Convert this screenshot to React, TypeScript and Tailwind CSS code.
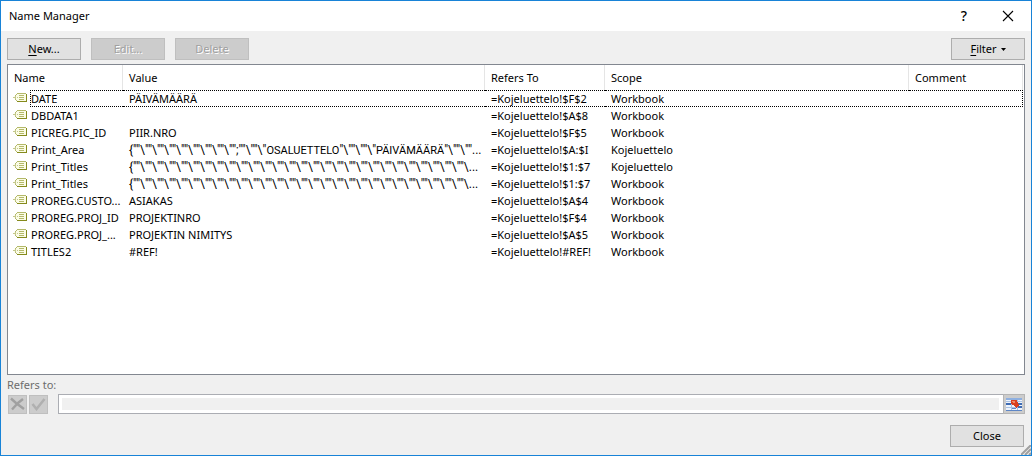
import type { ReactNode } from 'react';

type NameEntry = {
  name: string;
  value: string;
  refersTo: string;
  scope: string;
};

const titlesValue = '{' + '""\\'.repeat(28) + '...';

const entries: NameEntry[] = [
  { name: 'DATE', value: 'PÄIVÄMÄÄRÄ', refersTo: '=Kojeluettelo!$F$2', scope: 'Workbook' },
  { name: 'DBDATA1', value: '', refersTo: '=Kojeluettelo!$A$8', scope: 'Workbook' },
  { name: 'PICREG.PIC_ID', value: 'PIIR.NRO', refersTo: '=Kojeluettelo!$F$5', scope: 'Workbook' },
  {
    name: 'Print_Area',
    value: '{""\\""\\""\\""\\""\\""\\""\\""\\"";""\\""\\"OSALUETTELO"\\""\\""\\"PÄIVÄMÄÄRÄ"\\""\\""...',
    refersTo: '=Kojeluettelo!$A:$I',
    scope: 'Kojeluettelo',
  },
  { name: 'Print_Titles', value: titlesValue, refersTo: '=Kojeluettelo!$1:$7', scope: 'Kojeluettelo' },
  { name: 'Print_Titles', value: titlesValue, refersTo: '=Kojeluettelo!$1:$7', scope: 'Workbook' },
  { name: 'PROREG.CUSTO...', value: 'ASIAKAS', refersTo: '=Kojeluettelo!$A$4', scope: 'Workbook' },
  { name: 'PROREG.PROJ_ID', value: 'PROJEKTINRO', refersTo: '=Kojeluettelo!$F$4', scope: 'Workbook' },
  { name: 'PROREG.PROJ_...', value: 'PROJEKTIN NIMITYS', refersTo: '=Kojeluettelo!$A$5', scope: 'Workbook' },
  { name: 'TITLES2', value: '#REF!', refersTo: '=Kojeluettelo!#REF!', scope: 'Workbook' },
];

function TagIcon() {
  return (
    <svg width="14" height="10" viewBox="0 0 14 10" shapeRendering="crispEdges" className="block">
      <path d="M4 0h9v9H4L1 6V3z" fill="#fbfce6" />
      <path d="M4 0h9v1H4zM3 1h1v1H3zM2 2h1v1H2zM2 6h1v1H2zM3 7h1v1H3z" fill="#b4b96a" />
      <path d="M4 8h10v1H4zM13 1h1v8h-1z" fill="#858a1c" />
      <path d="M0 4h2v1H0zM2 3h1v3H2zM4 4h1v1H4z" fill="#c3c78c" />
      <path d="M6 2h5v1H6zM6 4h5v1H6zM6 6h5v1H6z" fill="#b4b96a" />
    </svg>
  );
}

function RangePickerIcon() {
  return (
    <svg width="16" height="13" viewBox="0 0 16 13" shapeRendering="crispEdges">
      <path d="M0 0h16v13H0z" fill="#eef4fc" />
      <path d="M0 0h16v2H0z" fill="#8fb0e0" />
      <path d="M0 3h16v1H0zM0 9h16v1H0zM5 2h1v11H5zM11 2h1v11h-1z" fill="#a9c1e4" />
      <path d="M0 5h5v2H0zM12 5h4v2h-4zM12 8h4v2h-4z" fill="#3f6cb4" />
      <path d="M0 12h16v1H0zM6 10h4v1H6z" fill="#5d86c6" />
      <path d="M5 2h6v2h1v2h1v2h-1v1h-1v1h-1V9H9V8H8V7H6V6H5z" fill="#d9401f" />
      <path d="M6 3h3v1H6zM7 4h2v1H7z" fill="#f08a66" />
    </svg>
  );
}

// Array constants are mostly quotes and backslashes: the punctuation is set a size up from the words
function ArrayValue({ value }: { value: string }) {
  return (
    <span className="font-['Roboto',sans-serif] text-[12px]">
      {value.split(/([A-ZÄ]+)/).map((part, i) => (
        <span key={i} className={i % 2 === 1 ? 'text-[11px]' : undefined}>
          {part}
        </span>
      ))}
    </span>
  );
}

function DialogButton({ children, disabled }: { children: ReactNode; disabled?: boolean }) {
  return (
    <button
      type="button"
      disabled={disabled}
      className="flex h-[22px] w-[74px] items-center justify-center border border-[#adadad] bg-[#e1e1e1] text-black disabled:border-[#bfbfbf] disabled:bg-[#cccccc] disabled:text-[#a0a0a0] disabled:[text-shadow:1px_1px_0_#fff]"
    >
      {children}
    </button>
  );
}

export default function App() {
  return (
    <div className="flex min-h-screen flex-col border border-[#1883d7] bg-[#f0f0f0] font-['Noto_Sans','Open_Sans',sans-serif] text-[11px] leading-4 text-black">
      {/* Title bar */}
      <header className="flex h-[30px] items-center justify-between bg-white pr-[17px] pl-2">
        <h1>Name Manager</h1>
        <div className="flex items-center gap-8">
          <button type="button" aria-label="Help" className="w-3 text-[14px] font-medium">
            ?
          </button>
          <button type="button" aria-label="Close window">
            <svg width="12" height="12" viewBox="0 0 12 12" className="block">
              <path d="M1 1l10 10M11 1L1 11" stroke="#000" strokeWidth="1.1" />
            </svg>
          </button>
        </div>
      </header>

      <main className="relative flex flex-1 flex-col px-1.5 pb-2">
        {/* Toolbar */}
        <div className="flex items-center justify-between pt-[7px] pb-1">
          <div className="flex gap-2.5">
            <DialogButton>
              <span>
                <u className="underline-offset-2">N</u>ew...
              </span>
            </DialogButton>
            <DialogButton disabled>Edit...</DialogButton>
            <DialogButton disabled>Delete</DialogButton>
          </div>
          <DialogButton>
            <span>
              <u className="underline-offset-2">F</u>ilter
            </span>
            <svg width="5" height="3" viewBox="0 0 5 3" className="ml-1">
              <path d="M0 0h5L2.5 3z" />
            </svg>
          </DialogButton>
        </div>

        {/* Defined names */}
        <div className="min-h-[311px] flex-1 border border-[#828790] bg-white pr-px">
          <table className="w-full table-fixed border-separate border-spacing-0">
            <colgroup>
              <col className="w-[22px]" />
              <col className="w-[93px]" />
              <col className="w-[362px]" />
              <col className="w-[120px]" />
              <col className="w-[304px]" />
              <col />
            </colgroup>
            <thead>
              <tr className="h-[25px] text-left *:border-r *:border-[#e5e5e5] *:p-0 *:pl-1.5 *:font-normal">
                <th colSpan={2}>Name</th>
                <th>Value</th>
                <th>Refers To</th>
                <th>Scope</th>
                <th>Comment</th>
              </tr>
            </thead>
            <tbody>
              {entries.map((entry, i) => {
                const cell = i === 0 ? 'border-y border-dotted border-black' : 'border-y border-transparent';
                return (
                  <tr key={i} className="h-[17px] leading-[15px] *:p-0">
                    <td className="align-top">
                      <div className="pt-[3px] pl-[5px]">
                        <TagIcon />
                      </div>
                    </td>
                    <td className={`${cell} border-l whitespace-nowrap`}>{entry.name}</td>
                    <td className={cell}>
                      <div className="h-[15px] pl-1.5 whitespace-nowrap">
                        {entry.value.startsWith('{') ? <ArrayValue value={entry.value} /> : entry.value}
                      </div>
                    </td>
                    <td className={cell}>
                      <div className="pl-1.5 whitespace-nowrap">{entry.refersTo}</div>
                    </td>
                    <td className={cell}>
                      <div className="pl-1.5">{entry.scope}</div>
                    </td>
                    <td className={`${cell} border-r`} />
                  </tr>
                );
              })}
            </tbody>
          </table>
        </div>

        {/* Reference editor */}
        <label htmlFor="refers-to" className="mt-0.5 text-[#6d6d6d]">
          Refers to:
        </label>
        <div className="mt-px flex h-5 items-center">
          <div className="flex gap-0.5 pl-px">
            <button type="button" disabled aria-label="Cancel edit" className="grid size-[19px] place-items-center border border-[#bfbfbf] bg-[#cccccc]">
              <svg width="15" height="14" viewBox="0 0 15 14">
                <path d="M1 1.5l5 4.5 8 6M13 2L8 6l-6 6.5" fill="none" stroke="#a0a0a0" strokeWidth="2.4" />
              </svg>
            </button>
            <button type="button" disabled aria-label="Accept edit" className="grid size-[19px] place-items-center border border-[#bfbfbf] bg-[#cccccc]">
              <svg width="15" height="14" viewBox="0 0 15 14">
                <path d="M1.5 7l4 5 8-10" fill="none" stroke="#b0b0b0" strokeWidth="2.6" />
              </svg>
            </button>
          </div>
          <div className="ml-2.5 flex h-5 flex-1 border border-[#abadb3] bg-white">
            <input id="refers-to" type="text" disabled className="m-[3px] mr-1 min-w-0 flex-1 bg-[#f0f0f0]" />
            <button type="button" aria-label="Collapse dialog" className="-my-px -mr-px grid w-[22px] place-items-center border border-[#b5b5b5] bg-[#cccccc]">
              <RangePickerIcon />
            </button>
          </div>
        </div>

        <div className="mt-[11px] flex justify-end pr-px">
          <DialogButton>Close</DialogButton>
        </div>

        {/* Resize grip */}
        <svg width="10" height="10" viewBox="0 0 10 10" className="absolute right-0 bottom-0">
          <path d="M0 10L10 0M4 10l6-6M8 10l2-2" stroke="#a0a0a0" strokeWidth="2" />
        </svg>
      </main>
    </div>
  );
}
